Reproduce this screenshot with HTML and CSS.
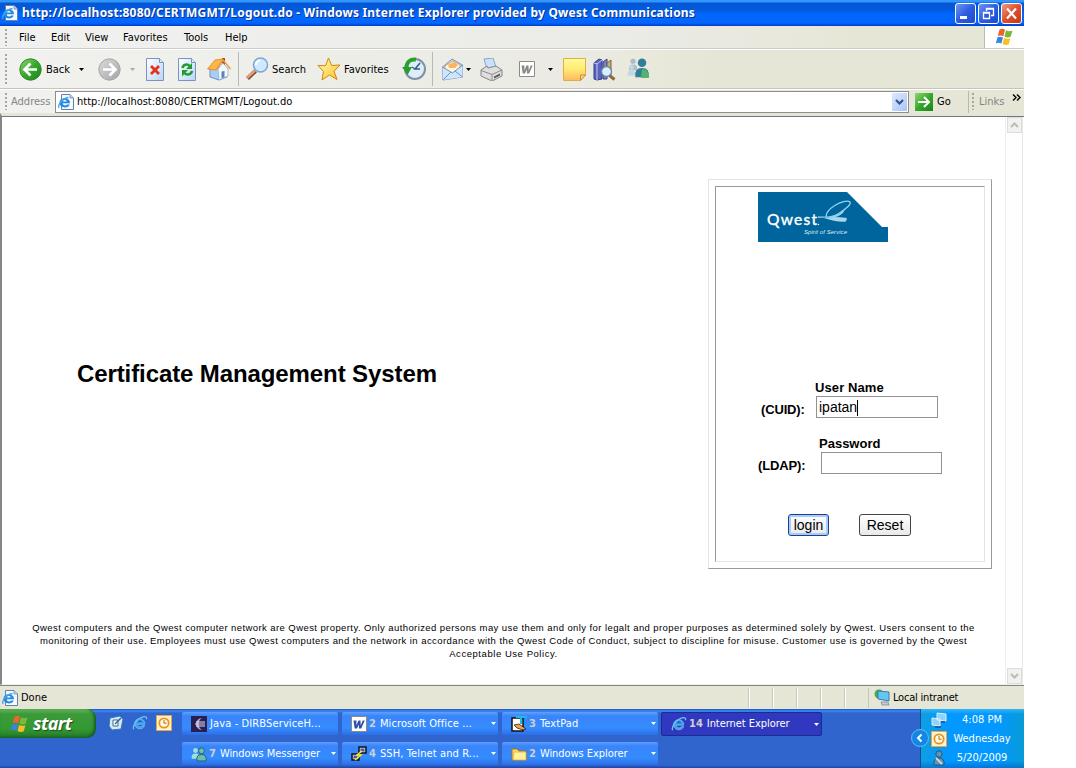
FILE: index.html
```html
<!DOCTYPE html>
<html lang="en">
<head>
<meta charset="utf-8">
<title>Certificate Management System</title>
<link rel="stylesheet" href="styles.css">
</head>
<body>
<svg class="defs" width="0" height="0">
  <defs>
    <linearGradient id="green" x1="0" y1="0" x2="1" y2="1"><stop offset="0" stop-color="#8ed66e"/><stop offset=".5" stop-color="#38a82c"/><stop offset="1" stop-color="#18851a"/></linearGradient>
    <linearGradient id="grey" x1="0" y1="0" x2="1" y2="1"><stop offset="0" stop-color="#dcdcdc"/><stop offset="1" stop-color="#a3a3a3"/></linearGradient>
    <linearGradient id="paper" x1="0" y1="0" x2="1" y2="1"><stop offset="0" stop-color="#fff"/><stop offset="1" stop-color="#b7d5f7"/></linearGradient>
    <linearGradient id="note" x1="0" y1="0" x2="0" y2="1"><stop offset="0" stop-color="#fffb9c"/><stop offset=".5" stop-color="#ffea70"/><stop offset="1" stop-color="#ffb765"/></linearGradient>
    <linearGradient id="star" x1="0" y1="0" x2="1" y2="1"><stop offset="0" stop-color="#fffbc0"/><stop offset="1" stop-color="#ffc21c"/></linearGradient>
    <symbol id="ie" viewBox="0 0 16 16"><path d="M12.800 9.200H5.200c.2 3 4.200 3.400 5.200 1.400h2.200c-1.400 4.700-10 4.200-10-2 0-6.500 10.600-6.800 10.200.6z" fill="#3aa0e8" stroke="#8bd2fb" stroke-width=".6"/><path d="M5.400 7.200h4.600C9.500 4.700 6 4.700 5.400 7.200z" fill="#2a62cc"/><path d="M1.700 14.200C0 11 5 3.200 12.200 1.700c2.200-.2 2.800.9 2.200 2.600" fill="none" stroke="#6cc3f5" stroke-width="1.300"/></symbol>
    <symbol id="iepage" viewBox="0 0 16 16"><path d="M3.500.5h8.500l3.500 3.500v11.500h-12z" fill="#f3f9ff" stroke="#6681a8"/><path d="M12 .5V4h3.500" fill="#b9d2ef" stroke="#6681a8" stroke-width=".7"/><path d="M12 9.300H4.700c.2 2.500 3.500 2.800 4.400 1.200h2.600c-1.300 4.400-10.200 3.800-10.200-1.700 0-6 10.800-6 10.500.5z" fill="#2789df"/><path d="M4.800 7.500h4c-.5-2-3.500-2-4 0z" fill="#fff"/><path d="M1 14C-.5 10.500 4 4.500 10.500 3.500" fill="none" stroke="#41a9ef" stroke-width="1.300"/></symbol>
    <symbol id="flag" viewBox="0 0 20 18"><path d="M4.500 1.500Q7.500 0 10 1.800L8.300 8.300Q5.500 6.700 2.800 8z" fill="#ef6330"/><path d="M11 2.300q3 1.600 6.500.2l-1.800 6.300q-3.100 1.500-6.300-.2z" fill="#7cb83a"/><path d="M2.500 9.200Q5.300 8 8 9.500l-1.600 6Q3.600 14 .8 15.300z" fill="#3985de"/><path d="M9.100 10q3 1.500 6.300.2l-1.700 6.100q-3 1.300-6.200-.3z" fill="#f9bd26"/></symbol>
    <symbol id="person" viewBox="0 0 12 16"><circle cx="6" cy="4" r="3.200"/><path d="M1 15q-1-7 5-7t5 7z"/></symbol>
    <symbol id="clock" viewBox="0 0 16 16"><path d="M.5.5h15v15H.5z" fill="#fff3cc" stroke="#efa338"/><circle cx="8" cy="8" r="4.700" fill="#fff8df" stroke="#e59420" stroke-width="1.700"/><path d="M8 5v3.200h2.500" fill="none" stroke="#b96b16"/></symbol>
    <symbol id="word" viewBox="0 0 16 16"><path d="M.5.5h15v15H.5z" fill="#fff" stroke="#8a8a8a"/><path d="M2.500 4.500h3l-.2 5 2.200-5h2l.2 5 2-5h2l-3.500 8H8l-.2-4-1.800 4H3.700z" fill="currentColor"/></symbol>
    <symbol id="down" viewBox="0 0 5 3"><path d="M0 0h5L2.500 3z" fill="currentColor"/></symbol>
  </defs>
</svg>
<div class="screen">
  <header class="titlebar">
    <svg class="i16"><use href="#iepage"/></svg>
    <span class="caption">http://localhost:8080/CERTMGMT/Logout.do - Windows Internet Explorer provided by Qwest Communications</span>
    <div class="winbuttons">
      <span class="wb"><svg viewBox="0 0 19 19"><path d="M4 12h7v3H4z" fill="#fff"/></svg></span>
      <span class="wb"><svg viewBox="0 0 19 19"><path d="M7.500 7V4.500h7v7H12M7 5h8" fill="none" stroke="#fff" stroke-width="1.300"/><path d="M4.500 8.500h6v6h-6zM4 9h7" fill="none" stroke="#fff" stroke-width="1.300"/></svg></span>
      <span class="wb close"><svg viewBox="0 0 19 19"><path d="M5 4.500l9 10M14 4.500l-9 10" stroke="#fff" stroke-width="2.200"/></svg></span>
    </div>
  </header>

  <nav class="menubar">
    <i class="grip"></i>
    <span class="m-file">File</span><span class="m-edit">Edit</span><span class="m-view">View</span><span class="m-fav">Favorites</span><span class="m-tools">Tools</span><span>Help</span>
    <div class="throbber"><svg width="20" height="18"><use href="#flag"/></svg></div>
  </nav>

  <div class="toolbar">
    <i class="grip tall"></i>
    <div class="tool back"><svg class="i23" viewBox="0 0 23 23"><circle cx="11.500" cy="11.500" r="10.700" fill="url(#green)" stroke="#2d8724"/><path d="M18 11.500H6M11.500 5.500l-6 6 6 6" fill="none" stroke="#fff" stroke-width="2.700"/></svg><span>Back</span></div>
    <svg class="arrow a1"><use href="#down"/></svg>
    <div class="tool forward"><svg class="i23" viewBox="0 0 23 23"><circle cx="11.500" cy="11.500" r="10.700" fill="url(#grey)" stroke="#a5a5a5"/><path d="M5 11.500h12M11.500 5.500l6 6-6 6" fill="none" stroke="#fff" stroke-width="2.700"/></svg></div>
    <svg class="arrow a2"><use href="#down"/></svg>
    <div class="tool stop"><svg class="i23" viewBox="0 0 23 23"><path d="M2.500.5h13l4 4v18h-17z" fill="url(#paper)" stroke="#7a94c0"/><path d="M15.500.5v4h4" fill="#dce9fa" stroke="#7a94c0"/><path d="M7 8l8 8M15 8l-8 8" stroke="#e5301b" stroke-width="2.800"/></svg></div>
    <div class="tool refresh"><svg class="i23" viewBox="0 0 23 23"><path d="M2.500.5h13l4 4v18h-17z" fill="url(#paper)" stroke="#7a94c0"/><path d="M15.500.5v4h4" fill="#dce9fa" stroke="#7a94c0"/><path d="M6.500 10c.5-3.500 5-4.500 7-2M16 13c-.7 3.700-5.200 4.700-7.500 2" fill="none" stroke="#239b2d" stroke-width="2.500"/><path d="M16 5v6h-6zM6 18.500V12h6z" fill="#239b2d"/></svg></div>
    <div class="tool home"><svg class="i24" viewBox="0 0 24 24"><path d="M15 1h3v7h-3z" fill="#a34c27"/><path d="M3 12l8-2 9 1v9l-8 3-9-3z" fill="#a9cdf3" stroke="#6e93c9"/><path d="M11 12l5-6 5 6v7l-9 4z" fill="#f3f9ff" stroke="#88a5ce" stroke-width=".7"/><path d="M.5 12L8 3l8-1-7 11z" fill="#ffb547" stroke="#d88726" stroke-width=".8"/><path d="M9 13l7-10 7.500 9" fill="none" stroke="#ed9c3c" stroke-width="1.500"/><path d="M14.500 14.500l3-.5v6.300l-3 1z" fill="#5d80b8"/></svg></div>
    <i class="sep"></i>
    <div class="tool search"><svg class="i24" viewBox="0 0 24 24"><path d="M2.500 21.500l8-7.500" stroke="#6d493a" stroke-width="4"/><path d="M2 21l8-7.500" stroke="#e99b6e" stroke-width="2.600"/><circle cx="15.500" cy="8" r="7" fill="#cfeaff" stroke="#7ca5d5" stroke-width="1.500"/><path d="M11 8q0-4 4-4.500" fill="none" stroke="#fff" stroke-width="2"/></svg><span>Search</span></div>
    <div class="tool favorites"><svg class="i24" viewBox="0 0 24 24"><path d="M11.500 1l3.200 7.500 8.300-.5-6 6.200 3 8.300-7.500-4.500L5 23l1.500-8.500L1 8.500l7.500.2z" fill="url(#star)" stroke="#cc8914"/></svg><span>Favorites</span></div>
    <div class="tool history"><svg class="i24" viewBox="0 0 24 24"><circle cx="13" cy="12" r="10" fill="#ddeefa" stroke="#8191a3" stroke-width="2"/><path d="M18 6l-5 6h5M13 12l-3-2" fill="none" stroke="#315d86" stroke-width="1.500"/><path d="M14 2.500Q5 1.500 4.500 11" fill="none" stroke="#2aa02c" stroke-width="4"/><path d="M0 10h10l-4.500 8z" fill="#2a9c2c"/></svg></div>
    <i class="sep s2"></i>
    <div class="tool mail"><svg class="i23" viewBox="0 0 23 23"><path d="M1.500 9L11 1l10.500 6v12L2 22z" fill="#b5d6f8" stroke="#7b99c0"/><path d="M4 8l8-5 7 4v6l-7 3-8-4z" fill="#fff6df" stroke="#ea9948" stroke-width=".8"/><path d="M7 7l6-3 4 3-3 3H8z" fill="#f8b45e"/><path d="M1.500 9.500L11 14l10.500-6v11L2 22z" fill="#cfe5fb"/><path d="M1.500 9l10 6 10-8M2 22l8-8M21.500 19L14 13" fill="none" stroke="#6f94c8"/></svg></div>
    <svg class="arrow a3"><use href="#down"/></svg>
    <div class="tool print"><svg class="i23" viewBox="0 0 23 23"><path d="M4 1l9-1 3 9-9 2z" fill="#c9e1fa" stroke="#8ba6c8"/><path d="M1 12l6-4 1 2 8-2 6 4v6l-10 5-11-5z" fill="#dedede" stroke="#858585"/><path d="M1 12.500l11 4 10-4.500M12 17v5" fill="none" stroke="#8c8c8c"/><path d="M14 18.500l6-3v2l-6 3z" fill="#555"/></svg></div>
    <div class="tool wordedit"><svg class="i16"><use href="#word"/></svg></div>
    <svg class="arrow a4"><use href="#down"/></svg>
    <div class="tool note"><svg class="i23" viewBox="0 0 23 23"><path d="M.5.5h22v16.500l-5 5.500H.5z" fill="url(#note)" stroke="#deb13c"/><path d="M22.500 17h-5v5.500z" fill="#ffdc75" stroke="#c98a34"/></svg></div>
    <div class="tool books"><svg class="i23" viewBox="0 0 23 23"><path d="M1 5l5-4 3 1v19l-5 1-3-1z" fill="#5863b9" stroke="#333f87"/><path d="M4 5v17M1 5l3 1 5-4" stroke="#bdc4ff" fill="none"/><path d="M10 4l4-3v20h-4z" fill="#7583cb" stroke="#3b437f"/><path d="M14 5l4-3v15h-4z" fill="#c7af6d" stroke="#76653a"/><path d="M16.500 17.500l5 4" stroke="#8d693a" stroke-width="3"/><circle cx="13.500" cy="13.500" r="5" fill="#d9efff" stroke="#6986a6" stroke-width="1.300"/></svg></div>
    <div class="tool people"><svg class="i24" viewBox="0 0 24 24"><use href="#person" x="1" y="1" width="10" height="13" fill="#a9bdc6"/><use href="#person" x="0" y="7" width="9" height="13" fill="#c3d7de"/><use href="#person" x="7" y="0" width="16" height="22" fill="#327d98"/><path d="M15 12q7 0 7 9h-8z" fill="#54b46b"/></svg></div>
  </div>

  <div class="addressbar">
    <i class="grip"></i><span class="addr-label">Address</span>
    <div class="addr-box"><svg class="i16"><use href="#iepage"/></svg><span>http://localhost:8080/CERTMGMT/Logout.do</span>
      <b class="combo"><svg width="9" height="6" viewBox="0 0 9 6"><path d="M1 1l3.500 3.500L8 1" fill="none" stroke="#35558b" stroke-width="2.200"/></svg></b></div>
    <svg class="goicon" viewBox="0 0 18 18"><path d="M0 0h18v18H0z" fill="url(#green)"/><path d="M3 9h11M9 4l5 5-5 5" fill="none" stroke="#fff" stroke-width="2"/></svg>
    <span class="go">Go</span><i class="sep s3"></i><i class="grip g2"></i><span class="links">Links</span>
    <svg class="more" viewBox="0 0 9 7"><path d="M1 .5l3 3-3 3M5 .5l3 3-3 3" fill="none" stroke="#000" stroke-width="1.400"/></svg>
  </div>

  <main class="viewport">
    <div class="page">
      <div class="columns">
        <h1>Certificate Management System</h1>
        <div class="panel"><form class="panel-in">
          <svg class="logo" viewBox="0 0 130 50"><path d="M0 0h89l35 35h6v15H0z" fill="#00659c"/>
            <text x="9" y="33" class="brand" textLength="50">Qwest</text><circle cx="60.500" cy="32.500" r=".7" fill="#fff"/>
            <text x="46" y="42" class="tag" textLength="43">Spirit of Service</text>
            <path d="M60 25q14 1 20-3Q94 13 92 10C87 6 64 18 69 26M75 25q9-2 11-7" fill="none" stroke="#92d1ee" stroke-width="1.300"/><path d="M66 26q9-2 23 0l-1 3.500q-9 1-22-3.500z" fill="#a7d6ed"/></svg>
          <div class="field user"><label for="cuid">(CUID):</label><div><strong>User Name</strong><div class="input" id="cuid">ipatan<i></i></div></div></div>
          <div class="field pass"><label for="ldap">(LDAP):</label><div><strong>Password</strong><div class="input" id="ldap"></div></div></div>
          <div class="actions"><button type="button" class="btn default">login</button><button type="button" class="btn reset">Reset</button></div>
        </form></div>
      </div>
      <footer class="legal">
        <p class="l1">Qwest computers and the Qwest computer network are Qwest property. Only authorized persons may use them and only for legalt and proper purposes as determined solely by Qwest. Users consent to the</p>
        <p class="l2">monitoring of their use. Employees must use Qwest computers and the network in accordance with the Qwest Code of Conduct, subject to discipline for misuse. Customer use is governed by the Qwest</p>
        <p class="l3">Acceptable Use Policy.</p>
      </footer>
    </div>
    <div class="scroll"><b><svg viewBox="0 0 9 6"><path d="M1 5l3.500-3.500L8 5" fill="none" stroke="#bbb" stroke-width="2"/></svg></b><b><svg viewBox="0 0 9 6"><path d="M1 1l3.500 3.500L8 1" fill="none" stroke="#bbb" stroke-width="2"/></svg></b></div>
  </main>

  <div class="status"><svg class="i16"><use href="#iepage"/></svg><span class="done">Done</span>
    <i></i><i></i><i></i><i></i><i></i>
    <div class="zone"><svg width="17" height="17" viewBox="0 0 17 17"><circle cx="5" cy="5" r="4.500" fill="#3fac50"/><path d="M4 2l11 1v9l-11-2z" fill="#62c7f2" stroke="#4779aa"/><path d="M7 13l7 0 1 3H8z" fill="#bfc9d8" stroke="#697992" stroke-width=".6"/></svg><span>Local intranet</span></div>
  </div>

  <div class="taskbar">
    <div class="start"><svg width="20" height="18"><use href="#flag"/></svg><span>start</span></div>
    <div class="quick">
      <svg class="i16" viewBox="0 0 16 16"><path d="M2 3l10-2 3 3-2 10-9 1-3-4z" fill="#d5ebfb" stroke="#3c75a8"/><path d="M5 5h5v6H5z" fill="#fff" stroke="#3d6a90"/><path d="M7 9l6-6" stroke="#2d628d" stroke-width="1.500"/></svg>
      <svg class="i16"><use href="#ie"/></svg><svg class="i16"><use href="#clock"/></svg>
    </div>
    <div class="tasks">
      <div class="task"><svg class="i16" viewBox="0 0 16 16"><path d="M0 0h16v16H0z" fill="#292052"/><path d="M11 2a6 6 0 100 12 7 7 0 010-12z" fill="#b6a6d9"/><path d="M5 6h9M4 8h10M5 10h9" stroke="#e1daf3"/></svg><span class="t-java wide">Java - DIRBServiceH...</span></div>
      <div class="task"><svg class="i16 blue"><use href="#word"/></svg><em>2</em><span class="wide">Microsoft Office ...</span><svg class="arrow"><use href="#down"/></svg></div>
      <div class="task"><svg class="i16" viewBox="0 0 16 16"><path d="M1 2h11v13H1z" fill="#fff" stroke="#111" stroke-width="1.500"/><path d="M5 1h11M10 1v7" stroke="#1bbbe9" stroke-width="2"/><path d="M3 9l5-1 7 5-3 1-6-2z" fill="#f2a146" stroke="#111" stroke-width=".7"/></svg><em>3</em><span class="wide">TextPad</span><svg class="arrow"><use href="#down"/></svg></div>
      <div class="task active"><svg class="i16"><use href="#ie"/></svg><em>14</em><span>Internet Explorer</span><svg class="arrow"><use href="#down"/></svg></div>
      <div class="task"><svg class="i16" viewBox="0 0 16 16"><use href="#person" x="0" y="1" width="9" height="13" fill="#9ee3d1"/><use href="#person" x="5" y="1" width="11" height="15" fill="#6cc1a0" stroke="#20588c"/></svg><em>7</em><span class="t-msn">Windows Messenger</span><svg class="arrow"><use href="#down"/></svg></div>
      <div class="task"><svg class="i16" viewBox="0 0 16 16"><path d="M8 1h7v6H8zM1 8h7v6H1z" fill="#d7d7d7" stroke="#111" stroke-width="1.500"/><path d="M9.500 2.500h4v3h-4zM2.500 9.500h4v3h-4z" fill="#415bb8"/><path d="M11 5L6 9h4l-6 5" fill="none" stroke="#ffe92a" stroke-width="1.500"/></svg><em>4</em><span class="wide">SSH, Telnet and R...</span><svg class="arrow"><use href="#down"/></svg></div>
      <div class="task"><svg class="i16" viewBox="0 0 16 16"><path d="M1 3h5l2 2h7v9H1z" fill="#ffda6d" stroke="#a97517"/><path d="M3 6h12v8H2z" fill="#fff09c" stroke="#dba932" stroke-width=".7"/></svg><em>2</em><span>Windows Explorer</span><svg class="arrow"><use href="#down"/></svg></div>
    </div>
    <div class="tray">
      <div class="expand"><svg viewBox="0 0 18 18"><circle cx="9" cy="9" r="8.500" fill="#1387e5" stroke="#65b9f6"/><path d="M10.500 5.500L7 9l3.500 3.500" fill="none" stroke="#fff" stroke-width="2"/></svg></div>
      <div class="trayicons">
        <svg class="i16" viewBox="0 0 16 16"><path d="M6 1l9 1v7l-9-1zM1 6l8 1v7l-8-1z" fill="#8ed3f9" stroke="#dceefb"/><path d="M4 15h6M10 10h4" stroke="#234d83" stroke-width="1.500"/></svg>
        <svg class="i16"><use href="#clock"/></svg>
        <svg class="i16" viewBox="0 0 16 16"><use href="#person" x="2" y="0" width="12" height="16" fill="#678fae" stroke="#24587e"/><path d="M5 8l6 6" stroke="#bdd" stroke-width="2"/></svg>
      </div>
      <div class="clock"><span>4:08 PM</span><span>Wednesday</span><span>5/20/2009</span></div>
    </div>
  </div>
</div>
</body>
</html>
```
FILE: styles.css
```css
* { box-sizing: border-box; }
body { margin: 0; background: #fff; font: 11px/14px "DejaVu Sans Condensed", "DejaVu Sans", sans-serif; font-stretch: condensed; color: #000; }
svg { display: block; flex: none; }
.defs { position: absolute; }
span, p, h1, strong, label { white-space: nowrap; }
.screen { width: 1024px; height: 768px; overflow: hidden; display: flex; flex-direction: column; }
.screen > * { flex: none; }
.i16 { width: 16px; height: 16px; }
.i23 { width: 23px; height: 23px; }
.i24 { width: 24px; height: 24px; }

.titlebar { height: 26px; display: flex; align-items: center; padding: 0 2px 0 2px; background: linear-gradient(#3296ff 0, #3296ff 2px, #0855d5 3px, #005cdc 10px, #0266ff 14px, #0266ff 23px, #003cc8 26px); }
.caption { margin-left: 4px; color: #fff; font: bold 12px/16px "Noto Sans", sans-serif; font-stretch: normal; text-shadow: 1px 1px #0a2f8b; letter-spacing: .205px; }
.winbuttons { display: flex; gap: 2px; margin-left: auto; }
.wb { width: 21px; height: 21px; border: 1px solid #fff; border-radius: 3px; background: linear-gradient(135deg, #7096f2, #2c5de0 50%, #1b4bd0); }
.wb.close { background: linear-gradient(135deg, #f09b80, #dd4f2c 50%, #c33a18); }

.menubar { height: 23px; display: flex; align-items: center; padding-left: 5px; background: linear-gradient(90deg, #f1f1ef, #ebebe8 60%, #e6e6d6 85%); border-bottom: 1px solid #cdcdc6; }
.grip { width: 2px; height: 17px; background: repeating-linear-gradient(#a6a69f 0 2px, transparent 2px 4px); }
.grip.tall { height: 31px; }
.m-file { margin-left: 12px; width: 32px; }
.m-edit { width: 34px; }
.m-view { width: 38px; }
.m-fav { width: 61px; }
.m-tools { width: 41px; }
.menubar > span { padding-top: 1px; }
.throbber { margin-left: auto; width: 40px; height: 22px; padding: 2px 0 0 10px; background: #fff; border-left: 1px solid #bbb; }

.toolbar { height: 40px; display: flex; align-items: center; padding-left: 5px; border-top: 1px solid #fff; border-bottom: 1px solid #c5c5bd; background: linear-gradient(90deg, #f1f1ef, #ebebe4 55%, #e6e6d6 70%); }
.tool { display: flex; align-items: center; gap: 3px; }
.tool span { padding-top: 1px; }
.arrow { width: 5px; height: 3px; }
.back { width: 60px; margin-left: 12px; gap: 4px; }
.forward { margin-left: 14px; width: 32px; }
.a2 { color: #aaa; }
.stop { margin-left: 9px; width: 32px; }
.refresh { width: 31px; }
.home { width: 31px; }
.sep { width: 1px; height: 34px; background: #b9b9b2; }
.search { margin-left: 6px; width: 72px; }
.favorites { width: 85px; }
.history { width: 30px; }
.mail { margin-left: 8px; width: 25px; }
.print { margin-left: 9px; width: 39px; }
.wordedit { width: 28px; color: #8a8a8a; }
.a4 { margin-left: 1px; }
.note { margin-left: 10px; width: 30px; }
.books { width: 34px; }

.addressbar { height: 24px; display: flex; align-items: center; padding-left: 5px; border-top: 1px solid #fff; background: linear-gradient(90deg, #f1f1ef, #e8e8df 60%, #e6e6d6); }
.addr-label { margin-left: 4px; width: 44px; color: #858585; }
.addr-box { width: 854px; height: 22px; border: 1px solid #8e8e8e; background: #fff; display: flex; align-items: center; padding-left: 2px; gap: 3px; }
.combo { margin-left: auto; margin-right: 1px; width: 15px; height: 18px; background: linear-gradient(135deg, #dce9ff, #aac5fa); display: grid; place-items: center; }
.goicon { width: 18px; height: 18px; margin-left: 6px; }
.go { margin-left: 4px; width: 31px; }
.s3 { height: 22px; }
.g2 { margin-left: 3px; }
.links { margin-left: 5px; width: 33px; color: #858585; }
.more { width: 9px; height: 7px; margin-bottom: 8px; }

.viewport { height: 572px; display: flex; border-top: 3px solid #e4e4da; border-left: 2px solid #858585; border-bottom: 1px solid #f2f0e4; box-shadow: inset 0 1px #777; }
.page { width: 1003px; }
.columns { height: 452px; display: flex; align-items: flex-start; margin-top: 2px; }
h1 { margin: 242px 0 0 75px; width: 631px; font: bold 24px/28px "Liberation Sans", Arial, sans-serif; letter-spacing: -.1px; }
.panel { margin-top: 61px; width: 284px; height: 390px; padding: 6px; border: 1px solid; border-color: #e4e4e4 #999 #999 #e4e4e4; }
.panel-in { width: 270px; height: 376px; border: 1px solid; border-color: #999 #e4e4e4 #e4e4e4 #999; font: 13px/15px "Liberation Sans", Arial, sans-serif; }
.logo { width: 130px; height: 50px; margin: 5px 0 0 42px; }
.brand { font: 500 15.500px Lato, sans-serif; fill: #fff; stroke: #fff; stroke-width: .3px; }
.tag { font: italic 6px "Liberation Sans", sans-serif; fill: #d9edf7; }
.field { display: flex; font-weight: bold; letter-spacing: .1px; }
.field strong { display: block; height: 16px; }
.field label { padding-top: 22px; letter-spacing: -.15px; }
.user { margin: 138px 0 0 45px; }
.user label { width: 55px; }
.user strong { margin-left: -1px; }
.pass { margin: 18px 0 0 42px; }
.pass label { width: 63px; }
.pass strong { margin-left: -2px; letter-spacing: 0; }
.input { width: 122px; height: 22px; border: 1px solid #929292; padding: 3px 2px; font: 14px/15px "Liberation Sans", Arial, sans-serif; letter-spacing: 0; display: flex; }
.pass .input { width: 121px; }
.input i { width: 1px; height: 16px; background: #000; }
.actions { display: flex; gap: 30px; margin: 40px 0 0 72px; }
.btn { width: 41px; height: 22px; padding: 0 0 1px; border: 1px solid #454545; border-radius: 3px; background: linear-gradient(#fff, #e9e9e9); font: 14px/18px "Liberation Sans", Arial, sans-serif; }
.default { border-color: #1d3f91; box-shadow: inset 0 0 0 2px #a9cbf7; }
.reset { width: 52px; }
.legal { margin-top: 51px; display: flex; flex-direction: column; align-items: center; font: 9.500px/13px "Liberation Sans", Arial, sans-serif; }
.legal p { margin: 0; letter-spacing: .415px; }
.legal .l2 { letter-spacing: .435px; }
.legal .l3 { letter-spacing: .55px; }
.scroll { width: 18px; border-left: 1px solid #eee; border-right: 1px solid #e8e8e8; margin-top: 1px; display: flex; flex-direction: column; justify-content: space-between; align-items: center; background: #fefefe; }
.scroll b { width: 15px; height: 16px; border: 1px solid #ddd; background: #f1f1ee; display: grid; place-items: center; }
.scroll svg { width: 9px; height: 6px; }

.status { height: 24px; display: flex; align-items: center; padding-left: 2px; background: #e6e6d6; border-top: 1px solid #858585; }
.status > span, .zone span { padding-top: 1px; }
.done { margin-left: 3px; width: 727px; }
.status i { width: 24px; height: 20px; border-left: 1px solid #c7c7bb; box-shadow: inset 1px 0 #fff; }
.zone { display: flex; align-items: center; gap: 2px; height: 20px; padding-left: 5px; border-left: 1px solid #c7c7bb; letter-spacing: -.2px; }

.taskbar { height: 59px; display: flex; align-items: flex-start; background: linear-gradient(#1c53bd 0, #3c8cf8 2px, #3165ce 4px, #3165ce 56px, #1845ae 59px); color: #fff; }
.start { width: 96px; height: 29px; display: flex; align-items: center; padding-left: 10px; gap: 3px; border-radius: 0 9px 9px 0; background: linear-gradient(#67b65e 0, #3b9a38 5px, #339933 20px, #25782a); box-shadow: inset -2px -1px 3px #175b25; }
.start span { font: italic bold 18px/24px "Noto Sans", sans-serif; text-shadow: 1px 1px 1px #174d1b; letter-spacing: -.6px; padding-bottom: 2px; }
.quick { display: flex; gap: 8px; margin: 6px 0 0 12px; width: 74px; }
.tasks { display: grid; grid-template-columns: 156px 156px 156px 160px; grid-auto-rows: 23px; column-gap: 4px; row-gap: 7px; margin-top: 3px; width: 738px; }
.task { display: flex; align-items: center; padding: 0 0 0 9px; background: linear-gradient(#60a1ff 0, #3a84fa 4px, #348cff 16px, #2e6de4); border-radius: 2px; }
.task em { font: bold 11px/14px "DejaVu Sans Condensed", sans-serif; color: #d2cdd0; margin-left: 2px; }
.task span { margin-left: 4px; letter-spacing: -.05px; }
.task .wide { letter-spacing: .12px; }
.task .arrow { margin: 0 2px 0 auto; }
.task .t-java { margin-left: 3px; }
.task.active { background: #3038bf; border: 1px solid #162d91; height: 24px; margin-left: -1px; padding-left: 9px; }
.blue { color: #304da3; }
.tray { width: 104px; height: 59px; display: flex; background: linear-gradient(rgba(80, 200, 250, .6) 0, transparent 5px, transparent 52px, rgba(0, 80, 180, .5)), linear-gradient(90deg, #0f9fe0, #0398ff 25%, #0398ff 75%, #089bd6); border-left: 1px solid #0d4d9c; }
.expand { width: 18px; margin: 20px 0 0 -10px; }
.trayicons { display: flex; flex-direction: column; gap: 3px; padding-top: 3px; margin-left: 2px; }
.clock { display: flex; flex-direction: column; align-items: center; width: 68px; margin-left: 1px; padding-top: 1px; line-height: 19px; }
```
